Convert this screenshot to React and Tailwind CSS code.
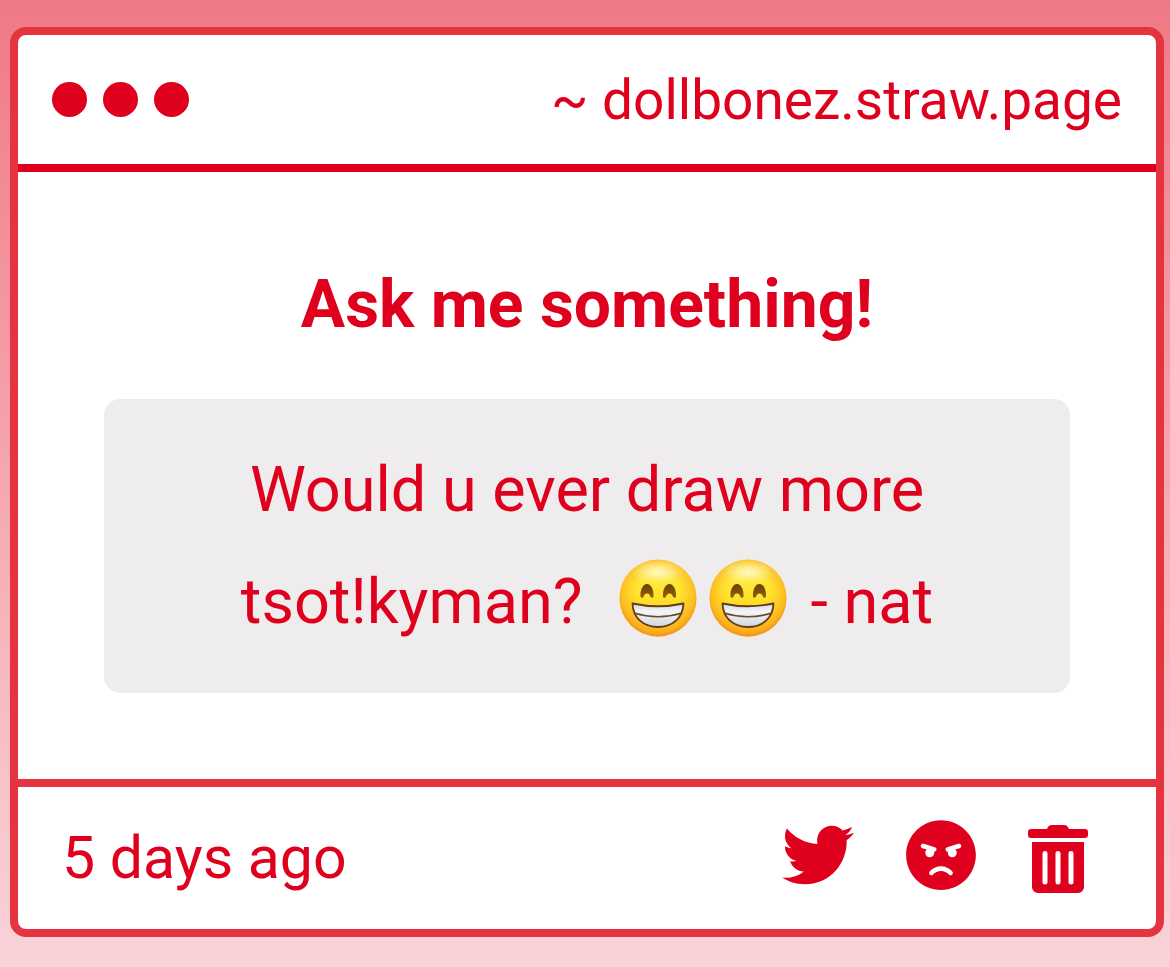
import { FaTwitter, FaAngry } from "react-icons/fa";

function Grin() {
  return (
    <svg viewBox="0 0 78 78" role="img" aria-label="Grinning face" className="h-[78px] w-[78px] shrink-0">
      <defs>
        <linearGradient id="skin" x1="0" y1="0" x2="0" y2="1">
          <stop offset="0" stopColor="#ffe94e" />
          <stop offset="0.45" stopColor="#ffe62c" />
          <stop offset="1" stopColor="#fdb71e" />
        </linearGradient>
        <radialGradient id="rim" cx="0.5" cy="0.46" r="0.55">
          <stop offset="0.5" stopColor="#fbb01e" stopOpacity="0" />
          <stop offset="0.85" stopColor="#fba81c" stopOpacity="0.6" />
          <stop offset="1" stopColor="#ef8a18" stopOpacity="1" />
        </radialGradient>
        <radialGradient id="shine" cx="0.5" cy="0.5" r="0.5">
          <stop offset="0" stopColor="#fffbd0" stopOpacity="0.9" />
          <stop offset="1" stopColor="#fffbd0" stopOpacity="0" />
        </radialGradient>
        <linearGradient id="eye" x1="0" y1="0" x2="0" y2="1">
          <stop offset="0" stopColor="#6a3f06" />
          <stop offset="1" stopColor="#94600e" />
        </linearGradient>
        <linearGradient id="teeth" x1="0" y1="0" x2="0" y2="1">
          <stop offset="0" stopColor="#d3d7e0" />
          <stop offset="0.35" stopColor="#f4f5f8" />
          <stop offset="1" stopColor="#d0d5df" />
        </linearGradient>
      </defs>
      <circle cx="39" cy="39" r="38.5" fill="url(#skin)" />
      <circle cx="39" cy="39" r="38.5" fill="url(#rim)" />
      <ellipse cx="39" cy="13" rx="26" ry="12" fill="url(#shine)" />
      <path d="M21.500 38C21 30.500 24 25 28 25s7 5.500 6.500 13q-1.500 1.500-3 0c-.4-2.300-1.600-3.500-3.500-3.500s-3.100 1.200-3.500 3.500q-1.500 1.500-3 0z" fill="url(#eye)" />
      <path d="M44 38C43.500 30.500 46.500 25 50.500 25s7 5.500 6.500 13q-1.500 1.500-3 0c-.4-2.300-1.600-3.500-3.500-3.500s-3.100 1.200-3.500 3.500q-1.500 1.500-3 0z" fill="url(#eye)" />
      <path d="M13.500 44.500Q39 50 64.500 44.500C64 59 53.500 68 39 68S14 59 13.500 44.500z" fill="url(#teeth)" stroke="#5f3d16" strokeWidth="1.800" strokeLinejoin="round" />
      <path d="M15 54Q39 61.500 63 54" fill="none" stroke="#6b4a26" strokeWidth="1.700" />
    </svg>
  );
}

function Trash() {
  return (
    <svg viewBox="0 0 60 68" aria-hidden="true" className="h-[68px] w-[60px]" fill="currentColor">
      <path d="M3 4h16c1-2.500 2.500-4 5-4h12c2.500 0 4 1.500 5 4h16a3 3 0 0 1 3 3v3a3 3 0 0 1-3 3H3a3 3 0 0 1-3-3V7a3 3 0 0 1 3-3z" />
      <path fillRule="evenodd" d="M4 17h52v45a6 6 0 0 1-6 6H10a6 6 0 0 1-6-6zM17 26a2.500 2.500 0 0 0-2.500 2.500v28.500a2.500 2.500 0 0 0 5 0V28.500A2.500 2.500 0 0 0 17 26zM30 26a2.500 2.500 0 0 0-2.500 2.500v28.500a2.500 2.500 0 0 0 5 0V28.500A2.500 2.500 0 0 0 30 26zM43 26a2.500 2.500 0 0 0-2.500 2.500v28.500a2.500 2.500 0 0 0 5 0V28.500A2.500 2.500 0 0 0 43 26z" />
    </svg>
  );
}

export default function App() {
  return (
    <div className="min-h-screen bg-linear-to-b from-[#ef7987] to-[#f8d4d9] pt-[27px] pr-[6px] pb-[30px] pl-[10px] font-['Roboto',sans-serif] text-[#df001d]">
      <main className="rounded-2xl border-8 border-[#e5343f] bg-white">
        <header className="flex h-[137px] items-center justify-between border-b-8 border-[#df001d] px-[34px]">
          <div className="flex gap-4" aria-hidden="true">
            <span className="size-[35px] rounded-full bg-[#df001d]" />
            <span className="size-[35px] rounded-full bg-[#df001d]" />
            <span className="size-[35px] rounded-full bg-[#df001d]" />
          </div>
          <a href="#profile" className="text-[55px] leading-[64px] whitespace-nowrap">~ dollbonez.straw.page</a>
        </header>
        <section className="px-[86px] pt-[93px] pb-[86px] text-center">
          <h1 className="text-[66px] leading-[80px] font-bold">Ask me something!</h1>
          <div className="mt-[54px] rounded-2xl bg-[#eeecec] px-8 py-[35px] text-[63px] leading-[112px]">
            <p>Would u ever draw more</p>
            <p className="flex items-center justify-center whitespace-nowrap">
              <span>tsot!kyman?</span>
              <span className="mr-6 ml-9 flex gap-3 pb-2">
                <Grin />
                <Grin />
              </span>
              <span>- nat</span>
            </p>
          </div>
        </section>
        <footer className="flex h-[150px] items-center justify-between border-t-8 border-[#e5343f] pr-[68px] pl-11">
          <time className="text-[59px] leading-[64px]">5 days ago</time>
          <div className="flex items-start gap-[51px] pb-1">
            <button type="button" aria-label="Share on Twitter"><FaTwitter className="size-[72px]" /></button>
            <button type="button" aria-label="Block sender"><FaAngry className="size-[72px]" /></button>
            <button type="button" aria-label="Delete question" className="pt-[6px]"><Trash /></button>
          </div>
        </footer>
      </main>
    </div>
  );
}
